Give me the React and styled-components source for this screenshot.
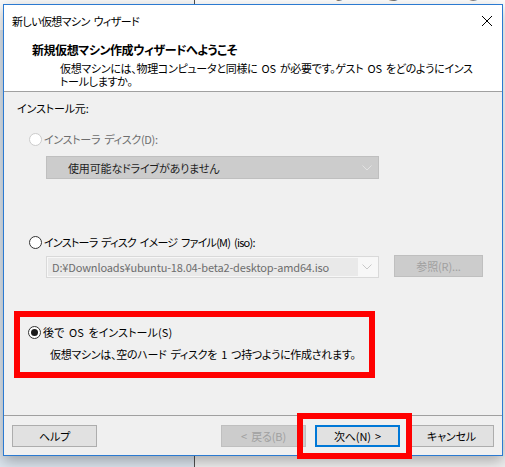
import styled, { createGlobalStyle } from "styled-components"

const GlobalStyle = createGlobalStyle`
  html, body {
    margin: 0;
    padding: 0;
  }
  body {
    font-family: "Noto Sans CJK JP", "Noto Sans", sans-serif;
    font-size: 11px;
    letter-spacing: -0.15px;
    word-spacing: 2px;
    color: #000;
    font-feature-settings: "palt" 1;
    white-space: nowrap;
  }
`

const Desktop = styled.div`
  position: relative;
  width: 505px;
  height: 467px;
  overflow: hidden;
  display: grid;
  grid-template-columns: 194px 1px 1fr;
`

const SidePane = styled.div`
  background: linear-gradient(#fafafa 0 30px, #dde6ef 30px);
`

const Divider = styled.div`
  background: #505050;
`

const PagePane = styled.div`
  background: linear-gradient(#fff 0 440px, #f0f0f0 440px);
  overflow: hidden;
`

const Headline = styled.h1`
  margin: -34px 0 0 27px;
  font: 700 40px/40px "DejaVu Sans", sans-serif;
  letter-spacing: 1px;
  word-spacing: 0;
`

const Window = styled.div`
  position: absolute;
  left: 3px;
  top: 4px;
  width: 500px;
  height: 452px;
  box-sizing: border-box;
  border: 1px solid #2b7ad1;
  background: #f0f0f0;
  box-shadow: 0 5px 14px rgba(0, 0, 0, 0.3);
  display: flex;
  flex-direction: column;
`

const TitleBar = styled.div`
  height: 31px;
  flex: none;
  background: #fff;
  display: flex;
  align-items: center;
  justify-content: space-between;
  padding: 0 10px 0 8px;
  line-height: 16px;
  letter-spacing: -0.6px;
`

const Header = styled.div`
  height: 56px;
  flex: none;
  box-sizing: border-box;
  background: #fff;
  border-bottom: 1px solid #a0a0a0;
  padding: 6px 0 0 28px;
`

const HeaderTitle = styled.div`
  font-size: 12px;
  font-weight: 700;
  letter-spacing: -0.45px;
  line-height: 16px;
`

const HeaderText = styled.div`
  margin: 4px 0 0 28px;
  letter-spacing: -0.3px;
`

const HeaderLine = styled.div`
  height: 13px;
  line-height: 13px;
`

const Body = styled.div`
  flex: 1;
  padding: 8px 0 0 13px;
  display: flex;
  flex-direction: column;
  align-items: flex-start;
`

const SourceLabel = styled.div`
  line-height: 16px;
`

const Option = styled.label`
  display: flex;
  align-items: center;
  gap: 2px;
  line-height: 16px;
  margin: ${p => p.$gap || 0}px 0 0 ${p => p.$indent || 0}px;
  letter-spacing: ${p => p.$spacing ?? -0.3}px;
  color: ${p => (p.$disabled ? "#6d6d6d" : "#000")};
`

const Radio = styled.span`
  width: 13px;
  height: 13px;
  box-sizing: border-box;
  border-radius: 50%;
  border: 1px solid ${p => (p.$disabled ? "#cccccc" : "#333")};
  background: #fff;
  display: grid;
  place-items: center;

  &::after {
    content: "";
    width: 7px;
    height: 7px;
    border-radius: 50%;
    background: #1a1a1a;
    display: ${p => (p.$checked ? "block" : "none")};
  }
`

const DriveSelect = styled.div`
  margin: 9px 0 0 29px;
  width: 333px;
  height: 23px;
  box-sizing: border-box;
  border: 1px solid #bfbfbf;
  background: #cccccc;
  display: flex;
  align-items: center;
  justify-content: space-between;
  padding: 0 6px 0 21px;
  color: #1e1e1e;
`

const PathRow = styled.div`
  margin: 5px 0 0 29px;
  display: flex;
  align-items: flex-start;
  gap: 15px;
`

const PathCombo = styled.div`
  margin-top: 1px;
  width: 333px;
  height: 22px;
  box-sizing: border-box;
  border: 1px solid #d9d9d9;
  background: #f7f7f7;
  display: flex;
  align-items: center;
  justify-content: space-between;
  padding: 1px 6px 1px 1px;
`

const PathText = styled.div`
  align-self: stretch;
  width: 310px;
  background: #e9e9e9;
  color: #6d6d6d;
  padding-left: 4px;
  box-sizing: border-box;
  display: flex;
  align-items: center;
  overflow: hidden;
`

const Button = styled.div`
  width: ${p => p.$width || 85}px;
  height: 22px;
  box-sizing: border-box;
  display: flex;
  align-items: center;
  justify-content: center;
  border: 1px solid ${p => (p.$disabled ? "#bfbfbf" : p.$primary ? "#0078d7" : "#adadad")};
  box-shadow: ${p => (p.$primary ? "inset 0 0 0 1px #0078d7" : "none")};
  background: ${p => (p.$disabled ? "#cccccc" : "#e1e1e1")};
  color: ${p => (p.$disabled ? "#a0a0a0" : "#000")};
`

const Highlight = styled.div`
  margin: 33px 0 0 -3px;
  width: 361px;
  height: 67px;
  box-sizing: border-box;
  border: 6px solid #ff0000;
  padding: 7px 0 0 8px;
`

const OptionNote = styled.div`
  margin: 6px 0 0 22px;
  line-height: 16px;
  letter-spacing: -0.3px;
`

const Footer = styled.div`
  height: 40px;
  flex: none;
  box-sizing: border-box;
  border-top: 1px solid #a0a0a0;
  padding: 9px 8px 0 8px;
  display: flex;
  align-items: flex-start;
  justify-content: space-between;
`

const ButtonGroup = styled.div`
  display: flex;
  gap: 9px;
`

const Marker = styled.div`
  position: absolute;
  left: 297px;
  top: 413px;
  width: 115px;
  height: 46px;
  box-sizing: border-box;
  border: 6px solid #ff0000;
`

function Chevron({ color }) {
  return (
    <svg width="10" height="6" viewBox="0 0 10 6">
      <polyline points="0.5,0.5 5,5 9.5,0.5" fill="none" stroke={color} strokeWidth="1" />
    </svg>
  )
}

function CloseIcon() {
  return (
    <svg width="10" height="10" viewBox="0 0 10 10">
      <path d="M0 0L10 10M10 0L0 10" stroke="#000" strokeWidth="1" />
    </svg>
  )
}

export default function App() {
  return (
    <>
      <GlobalStyle />
      <Desktop>
        <SidePane />
        <Divider />
        <PagePane>
          <Headline>vmware workstation 14 pro</Headline>
        </PagePane>

        <Window>
          <TitleBar>
            <span>新しい仮想マシン ウィザード</span>
            <CloseIcon />
          </TitleBar>

          <Header>
            <HeaderTitle>新規仮想マシン作成ウィザードへようこそ</HeaderTitle>
            <HeaderText>
              <HeaderLine>
                仮想マシンには、物理コンピュータと同様に OS が必要です。ゲスト OS をどのようにインス
              </HeaderLine>
              <HeaderLine>トールしますか。</HeaderLine>
            </HeaderText>
          </Header>

          <Body>
            <SourceLabel>インストール元:</SourceLabel>

            <Option $gap={15} $indent={12} $disabled>
              <Radio $disabled />
              インストーラ ディスク(D):
            </Option>
            <DriveSelect>
              <span>使用可能なドライブがありません</span>
              <Chevron color="#e2e2e2" />
            </DriveSelect>

            <Option $gap={55} $indent={12} $spacing={-0.75}>
              <Radio />
              インストーラ ディスク イメージ ファイル(M) (iso):
            </Option>
            <PathRow>
              <PathCombo>
                <PathText>D:¥Downloads¥ubuntu-18.04-beta2-desktop-amd64.iso</PathText>
                <Chevron color="#c8c8c8" />
              </PathCombo>
              <Button $width={89} $disabled>参照(R)...</Button>
            </PathRow>

            <Highlight>
              <Option $spacing={0.1}>
                <Radio $checked />
                後で OS をインストール(S)
              </Option>
              <OptionNote>仮想マシンは、空のハード ディスクを 1 つ持つように作成されます。</OptionNote>
            </Highlight>
          </Body>

          <Footer>
            <Button>ヘルプ</Button>
            <ButtonGroup>
              <Button $disabled>&lt; 戻る(B)</Button>
              <Button $primary>次へ(N) &gt;</Button>
              <Button>キャンセル</Button>
            </ButtonGroup>
          </Footer>
        </Window>

        <Marker />
      </Desktop>
    </>
  )
}
